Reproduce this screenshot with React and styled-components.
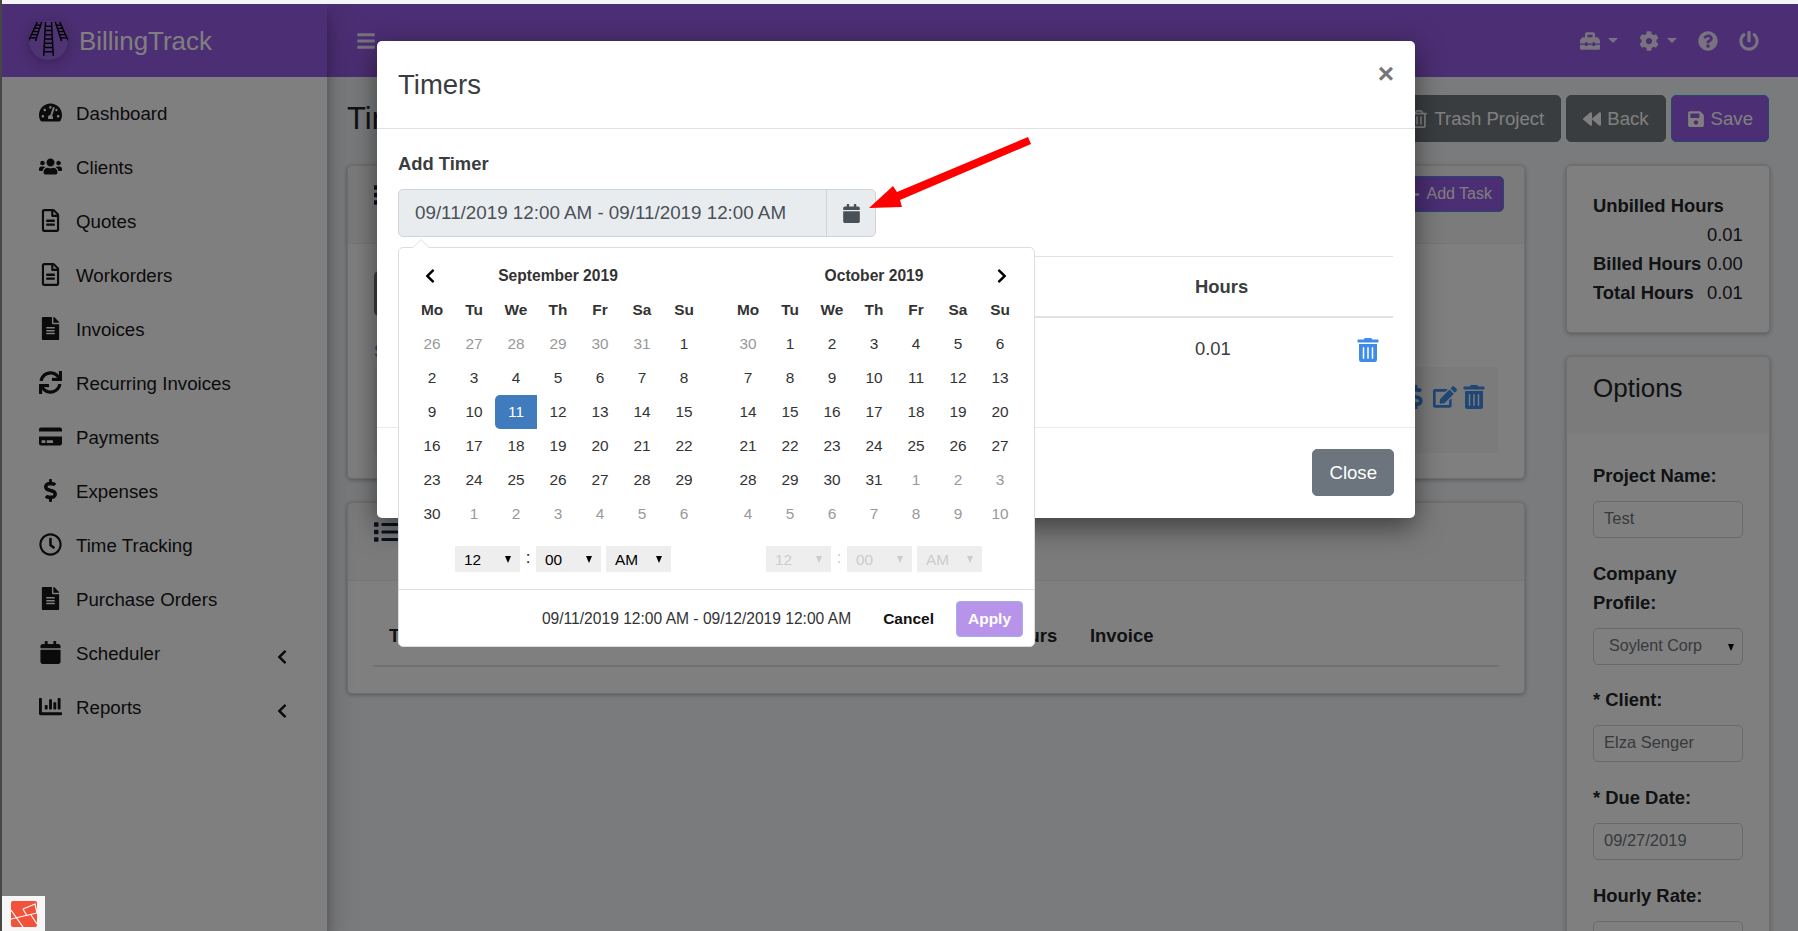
import React from "react";
import styled, { createGlobalStyle } from "styled-components";
import {
  FaBackward,
  FaBars,
  FaCalendar,
  FaChartBar,
  FaChevronLeft,
  FaChevronRight,
  FaCog,
  FaCreditCard,
  FaDollarSign,
  FaEdit,
  FaFileAlt,
  FaList,
  FaPlus,
  FaPowerOff,
  FaQuestionCircle,
  FaRegClock,
  FaRegFileAlt,
  FaRegTrashAlt,
  FaSave,
  FaSync,
  FaTachometerAlt,
  FaToolbox,
  FaTrashAlt,
  FaUsers,
} from "react-icons/fa";

const GlobalStyle = createGlobalStyle`
  html, body {
    margin: 0;
    padding: 0;
    height: 931px;
    overflow: hidden;
    background: #f4f5fa;
    font-family: "Liberation Sans", Arial, sans-serif;
    font-size: 18.4px;
    color: #212529;
  }
  * { box-sizing: border-box; }
`;

const Frame = styled.div`
  position: relative;
  height: 931px;
  padding-top: 4px;
  border-left: 2px solid #464646;
  overflow: hidden;
`;

const Shell = styled.div`
  position: relative;
  display: flex;
  height: 927px;
  background: #f4f6f9;
  overflow: hidden;
`;

/* sidebar */
const Sidebar = styled.aside`
  flex: 0 0 325px;
  background: #fff;
  box-shadow: 0 14px 28px rgba(0, 0, 0, 0.25), 0 10px 10px rgba(0, 0, 0, 0.22);
  z-index: 2;
`;

const Brand = styled.div`
  display: flex;
  align-items: center;
  gap: 11px;
  height: 73px;
  padding: 2px 0 0 27px;
  background: #975ce6;
  color: #fff;
  font-size: 25.9px;
`;

const LogoMark = styled.svg`
  width: 39px;
  height: 39px;
  margin-top: -2px;
  filter: drop-shadow(0 3px 6px rgba(0, 0, 0, 0.25));
`;

const Nav = styled.nav`
  padding-top: 10px;
`;

const NavItem = styled.div`
  display: flex;
  align-items: center;
  height: 54px;
  padding-left: 33px;
  font-size: 18.7px;
  color: #161616;
`;

const NavIcon = styled.span`
  flex: 0 0 30px;
  display: flex;
  justify-content: center;
  margin-right: 11px;
  margin-top: -3px;
  svg {
    height: 23px;
    width: auto;
  }
`;

const NavCaret = styled(FaChevronLeft)`
  margin-left: auto;
  margin-right: 37px;
  width: 16px;
  height: 16px;
  margin-top: 5px;
`;

/* main */
const Main = styled.div`
  flex: 1;
  min-width: 0;
`;

const Topbar = styled.header`
  display: flex;
  align-items: center;
  height: 73px;
  padding: 0 39px 0 29px;
  background: #975ce6;
  color: rgba(255, 255, 255, 0.85);
  svg {
    height: 20px;
    width: auto;
  }
`;

const TopIcons = styled.div`
  display: flex;
  align-items: center;
  gap: 21px;
  margin-left: auto;
`;

const TopIcon = styled.span`
  display: flex;
  align-items: center;
  gap: 8px;
`;

const TopCaret = styled.i`
  width: 0;
  height: 0;
  border: 5.5px solid transparent;
  border-top-color: rgba(255, 255, 255, 0.85);
  border-bottom: 0;
`;

const Content = styled.main`
  padding: 18px 28px 0 20px;
`;

const TitleRow = styled.div`
  display: flex;
  align-items: center;
  justify-content: space-between;
  margin-bottom: 23px;
`;

const PageTitle = styled.h1`
  margin: 0;
  font-size: 31px;
  font-weight: 400;
  color: #212529;
`;

const Actions = styled.div`
  display: flex;
  gap: 5px;
  margin-right: 1px;
`;

const Button = styled.button`
  display: inline-flex;
  align-items: center;
  gap: 6px;
  height: ${(p) => p.$h || 47}px;
  padding: 0 ${(p) => p.$px || 16}px;
  border: 1px solid ${(p) => p.$border || p.$bg};
  border-radius: 5px;
  background: ${(p) => p.$bg};
  color: #fff;
  font-family: inherit;
  font-size: ${(p) => p.$size || 18.6}px;
  svg {
    height: ${(p) => (p.$size ? 13 : 18)}px;
    width: auto;
  }
`;

const Columns = styled.div`
  display: grid;
  grid-template-columns: 1178px 204px;
  gap: 41px;
`;

const Stack = styled.div`
  display: flex;
  flex-direction: column;
  gap: 23px;
`;

const Card = styled.section`
  height: ${(p) => (p.$h ? `${p.$h}px` : "auto")};
  background: #fff;
  border: 1px solid rgba(0, 0, 0, 0.125);
  border-radius: 5px;
  box-shadow: 0 1px 4px rgba(0, 0, 0, 0.3);
`;

const CardHeader = styled.div`
  display: flex;
  align-items: flex-start;
  justify-content: space-between;
  height: 78px;
  padding: 10px 20px 0 26px;
  background: rgba(0, 0, 0, 0.03);
  border-bottom: 1px solid rgba(0, 0, 0, 0.03);
`;

const ListIcon = styled(FaList)`
  width: 24px;
  height: 24px;
  margin-top: 7px;
  color: #14233c;
`;

const CardBody = styled.div`
  padding: 27px 26px 0;
`;

const DarkStub = styled.div`
  width: 120px;
  height: 45px;
  background: #757b80;
  border-radius: 5px;
`;

const StubLink = styled.div`
  margin-top: 26px;
  font-size: 16px;
  line-height: 20px;
  color: #3f8ce8;
`;

const ShadedRow = styled.div`
  display: flex;
  justify-content: flex-end;
  gap: 5px;
  height: 86px;
  margin-top: 5px;
  padding: 18px 12px 0 0;
  background: rgba(0, 0, 0, 0.03);
  color: #3f8ce8;
  svg {
    height: 24px;
    width: auto;
  }
`;

const TaskHeadWrap = styled.div`
  padding: 0 25px;
`;

const HeadRow = styled.div`
  display: grid;
  grid-template-columns: 615px 86px 70px;
  height: 49px;
  margin-top: 37px;
  padding: 7px 0 0 16px;
  border-bottom: 2px solid #dee2e6;
  font-weight: 700;
`;

const StatBody = styled.div`
  display: grid;
  grid-template-columns: 114px auto;
  padding: 25px 26px 0;
  line-height: 29px;
`;

const StatLabel = styled.b`
  grid-column: ${(p) => (p.$wide ? "1 / -1" : "auto")};
`;

const StatValue = styled.span`
  grid-column: 2;
`;

const OptionsHead = styled.div`
  height: 77px;
  padding: 15px 26px 0;
  background: rgba(0, 0, 0, 0.03);
  font-size: 26px;
  line-height: 32px;
`;

const OptionsBody = styled.div`
  padding: 27px 26px 0;
`;

const FieldLabel = styled.label`
  display: block;
  margin-bottom: 11px;
  font-weight: 700;
  line-height: 29px;
`;

const Field = styled.div`
  height: 37px;
  margin-bottom: 21px;
  padding: 0 10px;
  border: 1px solid #ced4da;
  border-radius: 5px;
  color: #707478;
  font-size: 16.5px;
  line-height: 33px;
`;

const SelectShell = styled.span`
  position: relative;
  display: block;
  width: ${(p) => p.$w || "100%"};
  margin-left: ${(p) => p.$gap || 0}px;
  margin-bottom: ${(p) => p.$mb || 0}px;
  color: ${(p) => p.$arrow || "#000"};
  &::after {
    content: "";
    position: absolute;
    right: 9px;
    top: 50%;
    margin-top: -3px;
    border: 3.5px solid transparent;
    border-top: 7px solid currentColor;
    border-bottom: 0;
  }
`;

const FieldSelect = styled.select`
  display: block;
  width: 100%;
  height: 37px;
  padding: 0 11px 3px 15px;
  border: 1px solid #ced4da;
  border-radius: 5px;
  background: #fff;
  color: #707478;
  font-family: inherit;
  font-size: 16.1px;
  appearance: none;
`;

/* modal */
const Backdrop = styled.div`
  position: absolute;
  inset: 0;
  z-index: 5;
  background: rgba(0, 0, 0, 0.5);
`;

const Dialog = styled.div`
  position: relative;
  width: 1038px;
  height: 477px;
  margin: 37px 0 0 375px;
  background: #fff;
  border-radius: 5px;
  box-shadow: 0 9px 28px rgba(0, 0, 0, 0.5);
`;

const DialogHead = styled.div`
  display: flex;
  align-items: center;
  justify-content: space-between;
  height: 88px;
  padding: 0 21px;
  border-bottom: 1px solid #dee2e6;
`;

const DialogTitle = styled.h5`
  margin: 0 0 -1px;
  font-size: 27.5px;
  font-weight: 400;
  color: #3a3d40;
`;

const CloseX = styled.span`
  margin-top: -22px;
  font-size: 28px;
  font-weight: 700;
  color: #767676;
`;

const DialogBody = styled.div`
  height: 299px;
  padding: 21px 22px 0 21px;
  border-bottom: 1px solid #e9ecef;
`;

const AddLabel = styled.div`
  font-weight: 700;
  line-height: 28px;
  color: #3a3d40;
`;

const RangeGroup = styled.div`
  position: relative;
  display: flex;
  width: 478px;
  height: 48px;
  margin-top: 11px;
  background: #e9ecef;
  border: 1px solid #ced4da;
  border-radius: 5px;
  color: #495057;
`;

const RangeValue = styled.div`
  flex: 1;
  padding-left: 16px;
  font-size: 18.8px;
  line-height: 46px;
`;

const RangeAddon = styled.div`
  display: flex;
  align-items: center;
  justify-content: center;
  width: 49px;
  border-left: 1px solid #ced4da;
  svg {
    width: auto;
    height: 19px;
  }
`;

const TimerHead = styled.div`
  display: grid;
  grid-template-columns: 797px 1fr;
  height: 62px;
  margin-top: 19px;
  border-top: 1px solid #dee2e6;
  border-bottom: 2px solid #dee2e6;
  font-weight: 700;
  line-height: 60px;
  color: #3a3d40;
`;

const TimerRow = styled.div`
  display: grid;
  grid-template-columns: 797px 1fr 37px;
  align-items: center;
  height: 62px;
  color: #3a3d40;
`;

const TrashBlue = styled(FaTrashAlt)`
  width: auto;
  height: 24px;
  margin-top: 2px;
  color: #3f8ce8;
`;

const DialogFoot = styled.div`
  display: flex;
  justify-content: flex-end;
  padding: 21px 21px 21px 0;
`;

const RedArrow = styled.svg`
  position: absolute;
  left: 480px;
  top: 78px;
  width: 190px;
  height: 90px;
  z-index: 3;
`;

/* date range picker */
const Picker = styled.div`
  position: absolute;
  left: -1px;
  top: 57px;
  width: 637px;
  height: 400px;
  background: #fff;
  border: 1px solid #ddd;
  border-radius: 5px;
  color: #333;
  font-size: 15.4px;
  z-index: 2;
  &::before {
    content: "";
    position: absolute;
    left: 13px;
    top: -9px;
    border: 9px solid transparent;
    border-top: 0;
    border-bottom-color: #ddd;
  }
  &::after {
    content: "";
    position: absolute;
    left: 14px;
    top: -8px;
    border: 8px solid transparent;
    border-top: 0;
    border-bottom-color: #fff;
  }
`;

const CalendarPair = styled.div`
  display: flex;
  gap: 22px;
  height: 341px;
  padding: 11px 12px 0 12px;
`;

const CalendarPane = styled.div`
  width: 294px;
`;

const DayGrid = styled.div`
  display: grid;
  grid-template-columns: repeat(7, 42px);
  grid-auto-rows: 34px;
  align-items: center;
  justify-items: center;
`;

const MonthTitle = styled.div`
  grid-column: 2 / span 5;
  font-size: 15.6px;
  font-weight: 700;
`;

const Chevron = styled.span`
  display: flex;
  grid-column: ${(p) => p.$col};
  margin-left: ${(p) => p.$nudge}px;
  svg {
    width: 16px;
    height: 16px;
    color: #000;
  }
`;

const Weekday = styled.div`
  font-weight: 700;
`;

const Day = styled.div`
  display: flex;
  align-items: center;
  justify-content: center;
  width: 42px;
  height: 34px;
  color: ${(p) => (p.$active ? "#fff" : p.$off ? "#999" : "#333")};
  background: ${(p) => (p.$active ? "#3f7bbd" : "transparent")};
  border-radius: ${(p) => (p.$active ? "5px 0 0 5px" : 0)};
`;

const TimeRow = styled.div`
  display: flex;
  align-items: center;
  margin: 15px 0 0 ${(p) => p.$indent}px;
  color: ${(p) => (p.$off ? "#ccc" : "#222")};
`;

const TimeSelect = styled.select`
  display: block;
  width: 100%;
  height: 26px;
  padding: 0 0 0 9px;
  border: 0;
  border-radius: 0;
  background: #eee;
  color: inherit;
  font-family: inherit;
  font-size: 15.4px;
  opacity: 1;
  appearance: none;
`;

const Colon = styled.span`
  width: 16px;
  text-align: center;
  font-size: 17px;
  margin-top: -3px;
`;

const PickerFoot = styled.div`
  display: flex;
  align-items: center;
  justify-content: flex-end;
  height: 58px;
  padding: 0 11px 0 0;
  border-top: 1px solid #ddd;
`;

const SelectedRange = styled.span`
  margin-right: 32px;
  font-size: 15.6px;
`;

const CancelLink = styled.span`
  margin-right: 22px;
  font-weight: 700;
  color: #111;
  font-size: 15.5px;
`;

const ApplyButton = styled.span`
  display: flex;
  align-items: center;
  justify-content: center;
  width: 67px;
  height: 36px;
  background: #b794ea;
  border: 1px solid #9fb0ee;
  border-radius: 4px;
  color: #fff;
  font-weight: 700;
  font-size: 15.5px;
`;

const DebugTab = styled.div`
  position: absolute;
  left: 0;
  bottom: 0;
  display: flex;
  align-items: center;
  justify-content: center;
  width: 43px;
  height: 35px;
  background: #f6f6f6;
  z-index: 9;
`;

const range = (from, to) => Array.from({ length: to - from + 1 }, (_, i) => from + i);

const weekdays = ["Mo", "Tu", "We", "Th", "Fr", "Sa", "Su"];

const september = [
  ...range(26, 31).map((d) => ({ d, off: true })),
  ...range(1, 30).map((d) => ({ d, active: d === 11 })),
  ...range(1, 6).map((d) => ({ d, off: true })),
];

const october = [
  { d: 30, off: true },
  ...range(1, 31).map((d) => ({ d })),
  ...range(1, 10).map((d) => ({ d, off: true })),
];

const navItems = [
  { label: "Dashboard", icon: <FaTachometerAlt /> },
  { label: "Clients", icon: <FaUsers /> },
  { label: "Quotes", icon: <FaRegFileAlt /> },
  { label: "Workorders", icon: <FaRegFileAlt /> },
  { label: "Invoices", icon: <FaFileAlt /> },
  { label: "Recurring Invoices", icon: <FaSync /> },
  { label: "Payments", icon: <FaCreditCard /> },
  { label: "Expenses", icon: <FaDollarSign /> },
  { label: "Time Tracking", icon: <FaRegClock /> },
  { label: "Purchase Orders", icon: <FaFileAlt /> },
  { label: "Scheduler", icon: <FaCalendar />, caret: true },
  { label: "Reports", icon: <FaChartBar />, caret: true },
];

const Ladder = ({ x1, y1, x2, y2, w, rungs }) => (
  <g stroke="#000" strokeWidth="1.4" fill="none">
    <line x1={x1 - w} y1={y1} x2={x2 - w * 1.6} y2={y2} />
    <line x1={x1 + w} y1={y1} x2={x2 + w * 1.6} y2={y2} />
    {range(1, rungs).map((i) => {
      const t = i / (rungs + 1);
      const cx = x1 + (x2 - x1) * t;
      const cy = y1 + (y2 - y1) * t;
      const hw = w * (1 + 0.6 * t);
      return <line key={i} x1={cx - hw} y1={cy} x2={cx + hw} y2={cy} />;
    })}
  </g>
);

const Logo = () => (
  <LogoMark viewBox="0 0 39 39">
    <circle cx="19.5" cy="19.5" r="19.5" fill="#9e68e8" />
    <Ladder x1={19.5} y1={1} x2={19.5} y2={35} w={3} rungs={7} />
    <Ladder x1={10.5} y1={1} x2={3} y2={20} w={2.2} rungs={5} />
    <Ladder x1={28.5} y1={1} x2={36} y2={20} w={2.2} rungs={5} />
  </LogoMark>
);

const LaravelMark = () => (
  <svg width="26" height="26" viewBox="0 0 26 26">
    <rect width="26" height="26" rx="2" fill="#f4513a" />
    <g stroke="#fff" strokeWidth="1.2" fill="none">
      <path d="M0 9 L12 26" />
      <path d="M0 18 L26 12" />
      <path d="M12 8 L24 3 L26 12" />
      <path d="M12 8 L16 15" />
      <path d="M20 14 L26 23" />
    </g>
  </svg>
);

const Calendar = ({ title, days, side }) => (
  <DayGrid>
    {side === "left" && (
      <Chevron $col="1" $nudge={-4}>
        <FaChevronLeft />
      </Chevron>
    )}
    <MonthTitle>{title}</MonthTitle>
    {side === "right" && (
      <Chevron $col="7" $nudge={4}>
        <FaChevronRight />
      </Chevron>
    )}
    {side === "left" && <span />}
    {weekdays.map((w) => (
      <Weekday key={w}>{w}</Weekday>
    ))}
    {days.map((day, i) => (
      <Day key={i} $off={day.off} $active={day.active}>
        {day.d}
      </Day>
    ))}
  </DayGrid>
);

const TimeControls = ({ indent, off }) => {
  const arrow = off ? "#ccc" : "#000";
  return (
    <TimeRow $indent={indent} $off={off}>
      <SelectShell $w="65px" $arrow={arrow}>
        <TimeSelect disabled={off} defaultValue="12">
          <option>12</option>
        </TimeSelect>
      </SelectShell>
      <Colon>:</Colon>
      <SelectShell $w="65px" $arrow={arrow}>
        <TimeSelect disabled={off} defaultValue="00">
          <option>00</option>
        </TimeSelect>
      </SelectShell>
      <SelectShell $w="65px" $gap={5} $arrow={arrow}>
        <TimeSelect disabled={off} defaultValue="AM">
          <option>AM</option>
        </TimeSelect>
      </SelectShell>
    </TimeRow>
  );
};

const App = () => (
  <Frame>
    <GlobalStyle />
    <Shell>
      <Sidebar>
        <Brand>
          <Logo />
          BillingTrack
        </Brand>
        <Nav>
          {navItems.map((item) => (
            <NavItem key={item.label}>
              <NavIcon>{item.icon}</NavIcon>
              {item.label}
              {item.caret && <NavCaret />}
            </NavItem>
          ))}
        </Nav>
      </Sidebar>
      <Main>
        <Topbar>
          <FaBars />
          <TopIcons>
            <TopIcon>
              <FaToolbox />
              <TopCaret />
            </TopIcon>
            <TopIcon>
              <FaCog />
              <TopCaret />
            </TopIcon>
            <TopIcon>
              <FaQuestionCircle />
            </TopIcon>
            <TopIcon>
              <FaPowerOff />
            </TopIcon>
          </TopIcons>
        </Topbar>
        <Content>
          <TitleRow>
            <PageTitle>Time Tracking</PageTitle>
            <Actions>
              <Button $bg="#757b80">
                <FaRegTrashAlt />
                Trash Project
              </Button>
              <Button $bg="#757b80">
                <FaBackward />
                Back
              </Button>
              <Button $bg="#975ce6" $border="#4a90e2" $px={15}>
                <FaSave />
                Save
              </Button>
            </Actions>
          </TitleRow>
          <Columns>
            <Stack>
              <Card $h={314}>
                <CardHeader>
                  <ListIcon />
                  <Button $bg="#975ce6" $border="#4a90e2" $h={36} $px={11} $size={16}>
                    <FaPlus />
                    Add Task
                  </Button>
                </CardHeader>
                <CardBody>
                  <DarkStub />
                  <StubLink>Status</StubLink>
                  <ShadedRow>
                    <FaDollarSign />
                    <FaEdit />
                    <FaTrashAlt />
                  </ShadedRow>
                </CardBody>
              </Card>
              <Card $h={192}>
                <CardHeader>
                  <ListIcon />
                </CardHeader>
                <TaskHeadWrap>
                  <HeadRow>
                    <span>Task</span>
                    <span>Hours</span>
                    <span>Invoice</span>
                  </HeadRow>
                </TaskHeadWrap>
              </Card>
            </Stack>
            <Stack>
              <Card $h={168}>
                <StatBody>
                  <StatLabel $wide>Unbilled Hours</StatLabel>
                  <StatValue>0.01</StatValue>
                  <StatLabel>Billed Hours</StatLabel>
                  <StatValue>0.00</StatValue>
                  <StatLabel>Total Hours</StatLabel>
                  <StatValue>0.01</StatValue>
                </StatBody>
              </Card>
              <Card>
                <OptionsHead>Options</OptionsHead>
                <OptionsBody>
                  <FieldLabel>Project Name:</FieldLabel>
                  <Field>Test</Field>
                  <FieldLabel>Company Profile:</FieldLabel>
                  <SelectShell $mb={20} $arrow="#000">
                    <FieldSelect defaultValue="Soylent Corp">
                      <option>Soylent Corp</option>
                    </FieldSelect>
                  </SelectShell>
                  <FieldLabel>* Client:</FieldLabel>
                  <Field>Elza Senger</Field>
                  <FieldLabel>* Due Date:</FieldLabel>
                  <Field>09/27/2019</Field>
                  <FieldLabel>Hourly Rate:</FieldLabel>
                  <Field />
                </OptionsBody>
              </Card>
            </Stack>
          </Columns>
        </Content>
      </Main>
      <Backdrop>
        <Dialog>
          <DialogHead>
            <DialogTitle>Timers</DialogTitle>
            <CloseX>×</CloseX>
          </DialogHead>
          <DialogBody>
            <AddLabel>Add Timer</AddLabel>
            <RangeGroup>
              <RangeValue>09/11/2019 12:00 AM - 09/11/2019 12:00 AM</RangeValue>
              <RangeAddon>
                <FaCalendar />
              </RangeAddon>
              <Picker>
                <CalendarPair>
                  <CalendarPane>
                    <Calendar title="September 2019" days={september} side="left" />
                    <TimeControls indent={44} />
                  </CalendarPane>
                  <CalendarPane>
                    <Calendar title="October 2019" days={october} side="right" />
                    <TimeControls indent={39} off />
                  </CalendarPane>
                </CalendarPair>
                <PickerFoot>
                  <SelectedRange>09/11/2019 12:00 AM - 09/12/2019 12:00 AM</SelectedRange>
                  <CancelLink>Cancel</CancelLink>
                  <ApplyButton>Apply</ApplyButton>
                </PickerFoot>
              </Picker>
            </RangeGroup>
            <TimerHead>
              <span />
              <span>Hours</span>
            </TimerHead>
            <TimerRow>
              <span />
              <span>0.01</span>
              <TrashBlue />
            </TimerRow>
          </DialogBody>
          <DialogFoot>
            <Button $bg="#6c757d" $px={16}>
              Close
            </Button>
          </DialogFoot>
          <RedArrow viewBox="0 0 190 90">
            <path d="M12 89 L36 67 L40 73 L171 18 L174 25 L43 81 L45 88 Z" fill="#fe0000" />
          </RedArrow>
        </Dialog>
      </Backdrop>
      <DebugTab>
        <LaravelMark />
      </DebugTab>
    </Shell>
  </Frame>
);

export default App;
